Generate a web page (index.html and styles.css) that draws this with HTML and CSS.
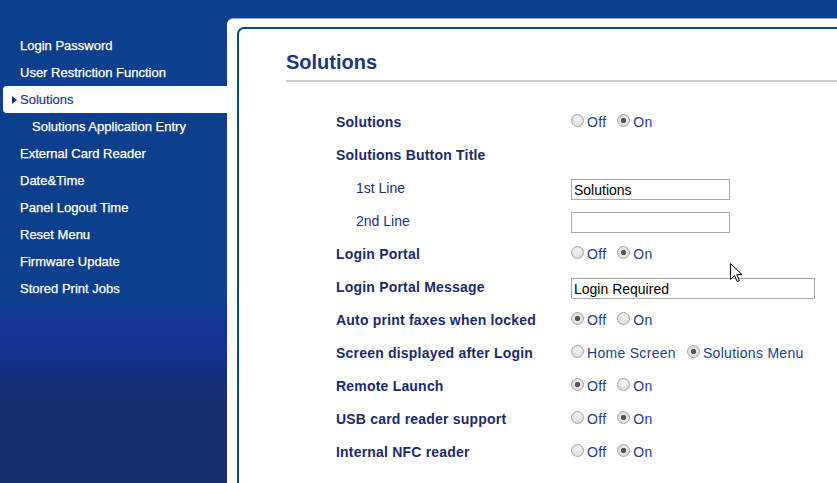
FILE: index.html
```html
<!DOCTYPE html>
<html lang="en">
<head>
    <meta charset="UTF-8">
    <meta name="viewport" content="width=device-width, initial-scale=1.0">
    <title>Solutions</title>
    <link rel="stylesheet" href="styles.css">
</head>
<body>
    <div class="topbar"></div>
    <div class="layout">
        <ul class="nav">
            <li>Login Password</li>
            <li>User Restriction Function</li>
            <li class="active"><span class="arrow"></span>Solutions</li>
            <li class="sub">Solutions Application Entry</li>
            <li>External Card Reader</li>
            <li>Date&amp;Time</li>
            <li>Panel Logout Time</li>
            <li>Reset Menu</li>
            <li>Firmware Update</li>
            <li>Stored Print Jobs</li>
        </ul>

        <div class="main">
            <div class="panel">
                <h2>Solutions</h2>
                <div class="form">
                    <div class="row">
                        <span class="label">Solutions</span>
                        <span class="value">
                            <label class="opt"><input type="radio" name="sol">Off</label>
                            <label class="opt"><input type="radio" name="sol" checked>On</label>
                        </span>
                    </div>
                    <div class="row">
                        <span class="label">Solutions Button Title</span>
                        <span class="value"></span>
                    </div>
                    <div class="row">
                        <span class="label sublabel">1st Line</span>
                        <span class="value"><input type="text" class="field" value="Solutions"></span>
                    </div>
                    <div class="row">
                        <span class="label sublabel">2nd Line</span>
                        <span class="value"><input type="text" class="field" value=""></span>
                    </div>
                    <div class="row">
                        <span class="label">Login Portal</span>
                        <span class="value">
                            <label class="opt"><input type="radio" name="portal">Off</label>
                            <label class="opt"><input type="radio" name="portal" checked>On</label>
                        </span>
                    </div>
                    <div class="row">
                        <span class="label">Login Portal Message</span>
                        <span class="value"><input type="text" class="field wide" value="Login Required"></span>
                    </div>
                    <div class="row">
                        <span class="label">Auto print faxes when locked</span>
                        <span class="value">
                            <label class="opt"><input type="radio" name="fax" checked>Off</label>
                            <label class="opt"><input type="radio" name="fax">On</label>
                        </span>
                    </div>
                    <div class="row">
                        <span class="label">Screen displayed after Login</span>
                        <span class="value">
                            <label class="opt"><input type="radio" name="screen">Home Screen</label>
                            <label class="opt"><input type="radio" name="screen" checked>Solutions Menu</label>
                        </span>
                    </div>
                    <div class="row">
                        <span class="label">Remote Launch</span>
                        <span class="value">
                            <label class="opt"><input type="radio" name="remote" checked>Off</label>
                            <label class="opt"><input type="radio" name="remote">On</label>
                        </span>
                    </div>
                    <div class="row">
                        <span class="label">USB card reader support</span>
                        <span class="value">
                            <label class="opt"><input type="radio" name="usb">Off</label>
                            <label class="opt"><input type="radio" name="usb" checked>On</label>
                        </span>
                    </div>
                    <div class="row">
                        <span class="label">Internal NFC reader</span>
                        <span class="value">
                            <label class="opt"><input type="radio" name="nfc">Off</label>
                            <label class="opt"><input type="radio" name="nfc" checked>On</label>
                        </span>
                    </div>
                </div>
            </div>
        </div>
    </div>

    <!-- mouse pointer -->
    <svg class="cursor" width="13" height="20" viewBox="0 0 13 20">
        <path d="M0.5 0.5 L0.5 16.5 L4.5 12.5 L7.2 18.6 L9.4 17.6 L6.8 11.6 L12 11.6 Z" fill="#fff" stroke="#000" stroke-width="1" stroke-linejoin="miter"/>
    </svg>
</body>
</html>
```

FILE: styles.css
```css
html, body {
    margin: 0;
    height: 100%;
}
body {
    font-family: "Liberation Sans", Arial, sans-serif;
    background: linear-gradient(to bottom, #0e3f8c 0, #0e3f8c 300px, #15339a 332px, #17307a 380px, #172e6e 410px, #172e6e 100%);
    overflow: hidden;
}
.topbar {
    height: 19px;
}
.layout {
    display: flex;
    height: calc(100% - 19px);
}
.nav {
    list-style: none;
    margin: 0;
    padding: 13px 0 0 0;
    width: 227px;
    flex-shrink: 0;
}
.nav li {
    color: #fff;
    font-size: 13px;
    line-height: 27px;
    height: 27px;
    padding-left: 20px;
    white-space: nowrap;
    -webkit-text-stroke: 0.25px #fff;
}
.nav li.sub {
    padding-left: 32px;
}
.nav li.active {
    background: #fff;
    color: #24358c;
    -webkit-text-stroke: 0.2px #24358c;
    margin-left: 3px;
    padding-left: 9px;
    border-radius: 4px 0 0 4px;
}
.arrow {
    display: inline-block;
    width: 0;
    height: 0;
    border-top: 4px solid transparent;
    border-bottom: 4px solid transparent;
    border-left: 5px solid #1b3078;
    margin-right: 3px;
    vertical-align: 0;
}
.main {
    flex: 1;
    background: #fff;
    border-top-left-radius: 6px;
    box-shadow: 0 -1px 0 #9aa4b8;
    overflow: hidden;
}
.panel {
    margin: 8px 0 0 10px;
    height: 100%;
    border-top: 2px solid #0b4c91;
    border-left: 2px solid #0b4c91;
    border-top-left-radius: 7px;
    padding: 21px 0 0 48px;
}
h2 {
    margin: 0;
    font-size: 20px;
    line-height: 24px;
    color: #1b377e;
    padding-bottom: 6px;
    border-bottom: 2px solid #cccccc;
    margin-left: -1px;
}
.form {
    margin-top: 23px;
    padding-left: 49px;
}
.row {
    display: grid;
    grid-template-columns: 235px 1fr;
    align-items: center;
    height: 33px;
}
.label {
    font-size: 14px;
    font-weight: bold;
    color: #1a2a6c;
    letter-spacing: 0.2px;
}
.label.sublabel {
    font-weight: normal;
    color: #1c2f78;
    padding-left: 20px;
    letter-spacing: 0;
}
.value {
    display: flex;
    align-items: center;
    gap: 10px;
}
.opt {
    display: flex;
    align-items: center;
    font-size: 14px;
    color: #213c8c;
    letter-spacing: 0.3px;
}
.opt + .opt {
    margin-left: 1px;
}
.opt input {
    appearance: none;
    -webkit-appearance: none;
    width: 13px;
    height: 13px;
    margin: 0 3px 0 0;
    border: 1px solid #a4a4a4;
    border-radius: 50%;
    background: radial-gradient(circle at 50% 35%, #f4f4f4 0, #dcdcdc 80%);
    position: relative;
    top: -1px;
}
.opt input:checked {
    background: radial-gradient(circle, #555 0, #555 2.4px, #e6e6e6 3px, #d6d6d6 100%);
}
.field {
    box-sizing: border-box;
    width: 159px;
    height: 21px;
    border: 1px solid #a9a9a9;
    padding: 0 2px;
    font-family: "Liberation Sans", Arial, sans-serif;
    font-size: 14px;
    color: #000;
    margin: 4px 0 0 0;
    outline: none;
}
.field.wide {
    width: 244px;
}
.cursor {
    position: absolute;
    left: 730px;
    top: 263px;
}
```
